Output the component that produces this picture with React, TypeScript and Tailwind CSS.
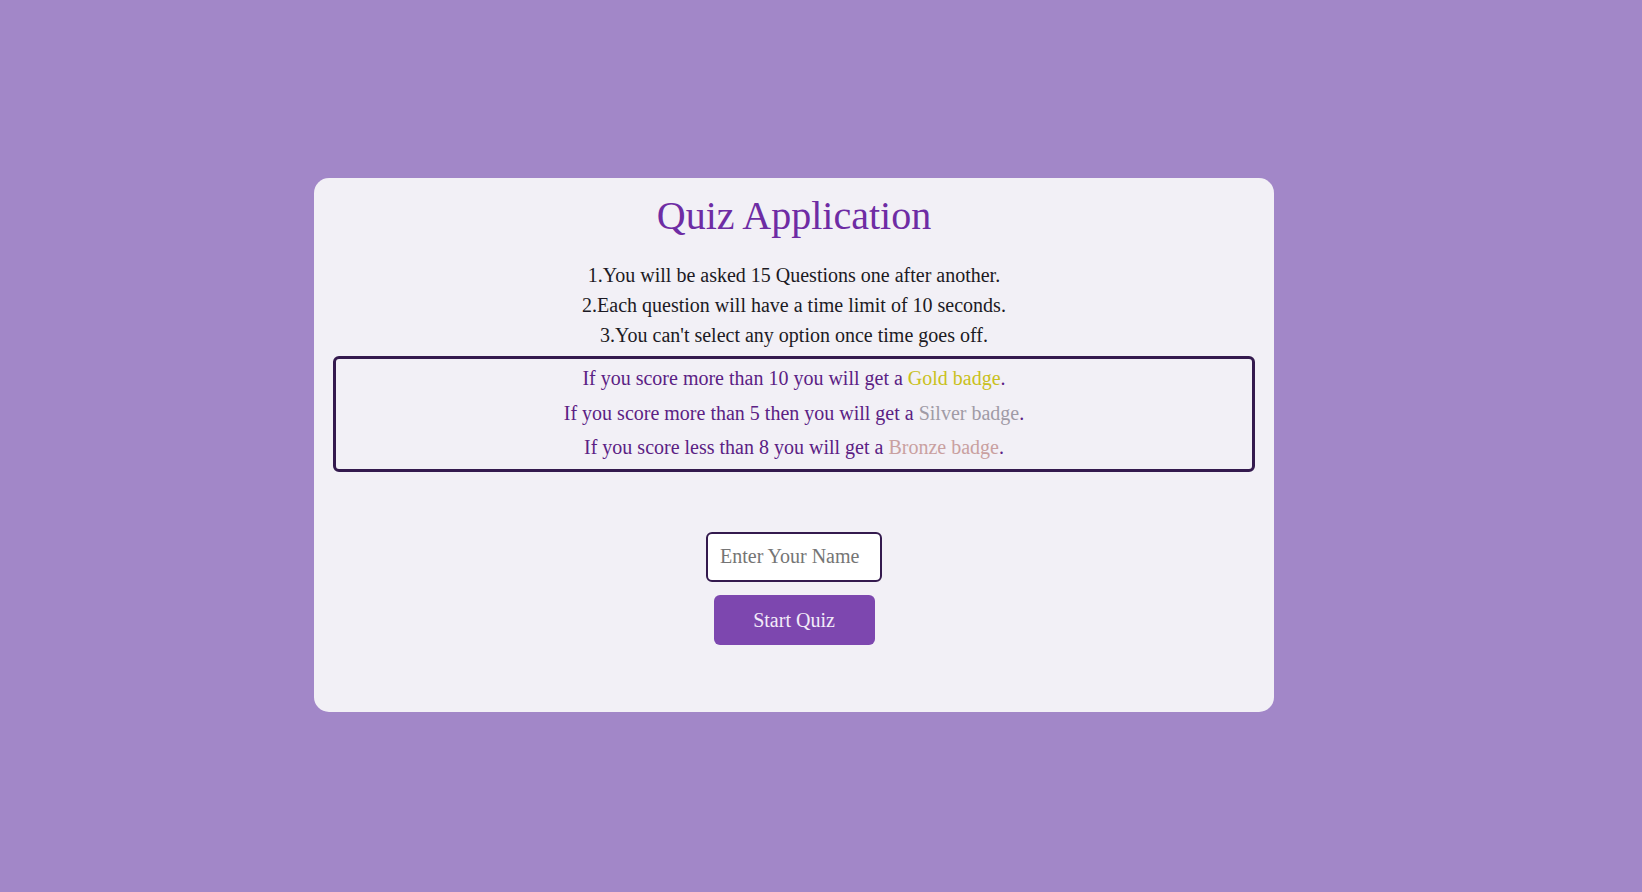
export default function App() {
  return (
    <div className="min-h-screen w-full bg-[#a287c8] pt-[178px] font-['Liberation_Serif',serif]">
      <div className="ml-[314px] w-[960px] h-[534px] bg-[#f2f0f6] rounded-[15px] flex flex-col items-center px-[19px] pt-[15px]">
        <h1 className="text-[40px] leading-[46px] text-[#6e2ca4]">Quiz Application</h1>

        <div className="mt-[21px] text-[20px] leading-[30px] text-[#1c1a24] text-center">
          <p>1.You will be asked 15 Questions one after another.</p>
          <p>2.Each question will have a time limit of 10 seconds.</p>
          <p>3.You can't select any option once time goes off.</p>
        </div>

        <div className="mt-[6px] w-full border-[3px] border-[#341a4e] rounded-[6px] text-center text-[20px] leading-[34.5px] text-[#5b2184] pt-[2px] pb-[4px]">
          <p>
            If you score more than 10 you will get a <span className="text-[#c9c120]">Gold badge</span>.
          </p>
          <p>
            If you score more than 5 then you will get a <span className="text-[#a09ba6]">Silver badge</span>.
          </p>
          <p>
            If you score less than 8 you will get a <span className="text-[#c9a0a0]">Bronze badge</span>.
          </p>
        </div>

        <input
          type="text"
          placeholder="Enter Your Name"
          className="mt-[60px] w-[176px] h-[50px] bg-white border-2 border-[#341a4e] rounded-[6px] px-[12px] text-[20px] text-[#333] placeholder:text-[#757575] outline-none"
        />

        <button className="mt-[13px] w-[161px] h-[50px] bg-[#7d47af] rounded-[6px] text-[20px] text-[#f3ecf9]">
          Start Quiz
        </button>
      </div>
    </div>
  );
}
